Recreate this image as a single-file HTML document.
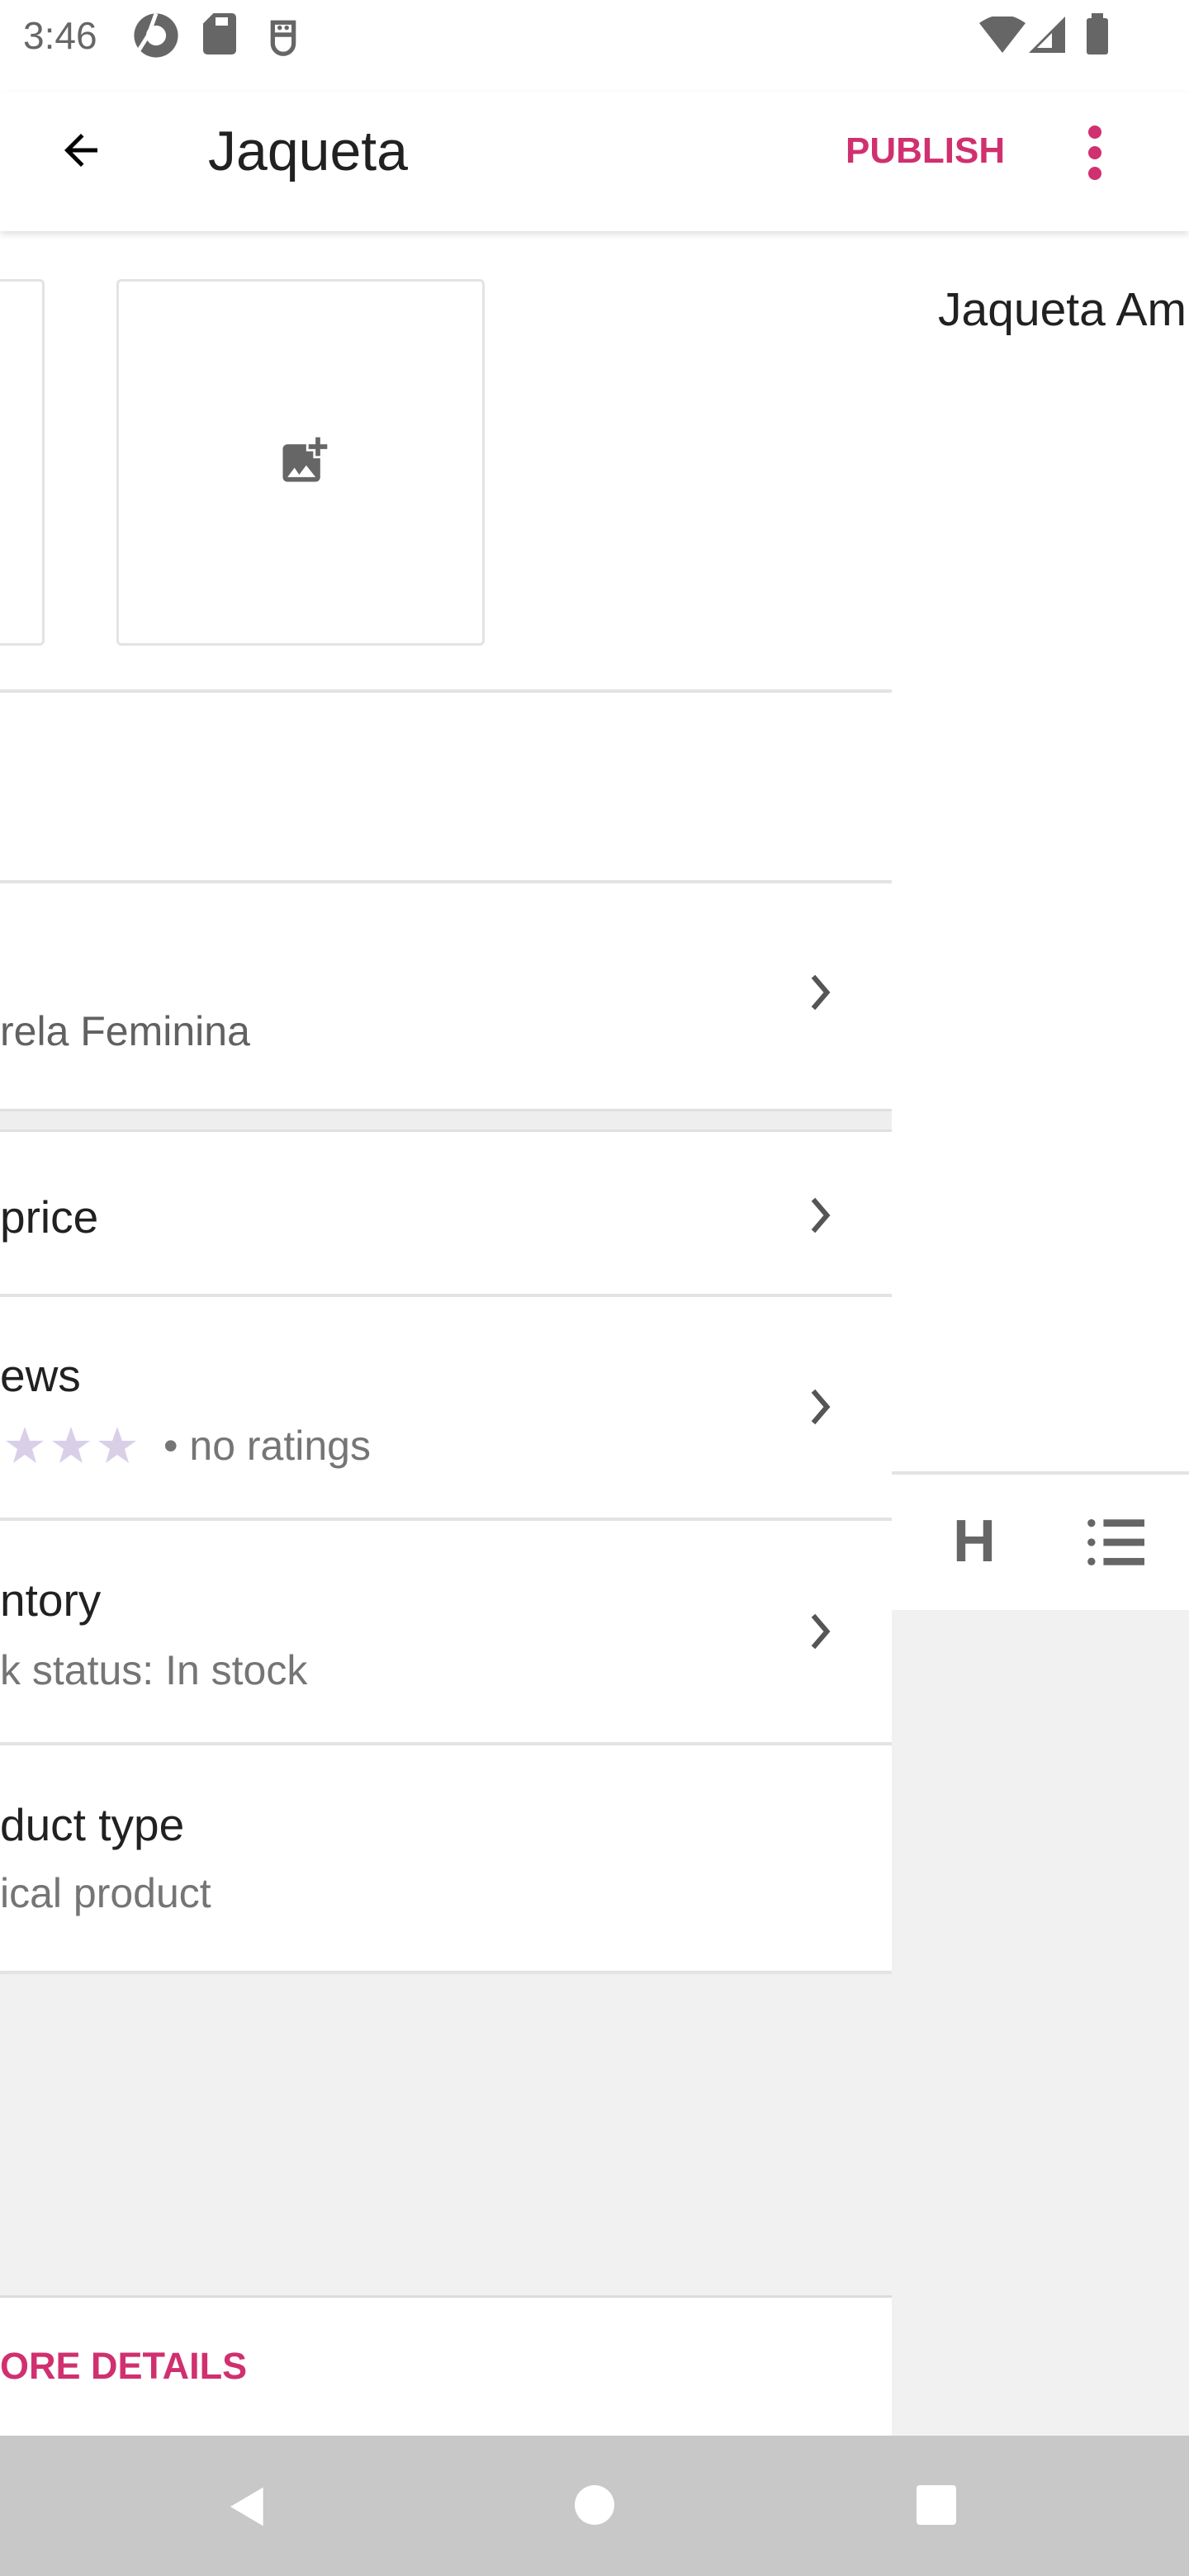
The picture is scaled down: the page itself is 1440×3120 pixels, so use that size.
<!DOCTYPE html>
<html><head><style>
*{margin:0;padding:0;box-sizing:border-box}
body{width:1440px;height:3120px;position:relative;overflow:hidden;background:#fff;font-family:"Liberation Sans",Roboto,sans-serif;}
.a{position:absolute}
.t{color:#212121;font-size:55px;white-space:nowrap}
.s{color:#757575;font-size:50px;white-space:nowrap}
.div{position:absolute;left:0;width:1080px;height:4px;background:#e3e3e3}
.chev{position:absolute;left:978px;width:36px;height:44px}
</style></head><body>
<!-- status bar -->
<div class="a" style="left:28px;top:16px;font-size:46px;color:#666">3:46</div>
<svg class="a" style="left:160px;top:14px" width="58" height="58" viewBox="0 0 24 24"><circle cx="12" cy="12" r="11" fill="#666"/><circle cx="12" cy="12" r="5" fill="#fff"/><path d="M12 1 L8 12 L3 20" stroke="#fff" stroke-width="2" fill="none"/></svg>
<svg class="a" style="left:246px;top:16px" width="40" height="50" viewBox="0 0 16 20"><path d="M5 0H14a2 2 0 0 1 2 2V18a2 2 0 0 1-2 2H2a2 2 0 0 1-2-2V5z" fill="#666"/><rect x="6" y="2" width="6" height="4" fill="#fff"/></svg>
<svg class="a" style="left:324px;top:14px" width="38" height="54" viewBox="0 0 18 25"><path d="M3 6h12v12a6 6 0 0 1-12 0z" fill="none" stroke="#666" stroke-width="2.5"/><line x1="3" y1="13" x2="15" y2="13" stroke="#666" stroke-width="2.5"/><circle cx="7" cy="9" r="1.3" fill="#666"/><circle cx="11" cy="9" r="1.3" fill="#666"/></svg>
<svg class="a" style="left:1186px;top:20px" width="56" height="44" viewBox="0 0 28 22"><path d="M0 4 Q14 -6 28 4 L14 22z" fill="#666"/></svg>
<svg class="a" style="left:1246px;top:20px" width="44" height="44" viewBox="0 0 22 22"><path d="M22 0V22H0z" fill="#666"/><path d="M14 10V19H5z" fill="#fff"/></svg>
<div class="a" style="left:1316px;top:22px;width:26px;height:44px;background:#666;border-radius:3px"></div>
<div class="a" style="left:1322px;top:16px;width:14px;height:8px;background:#666"></div>
<!-- toolbar -->
<div class="a" style="left:0;top:112px;width:1440px;height:168px;background:#fff;box-shadow:0 4px 8px rgba(0,0,0,.12);z-index:2">
<svg class="a" style="left:68px;top:40px" width="60" height="60" viewBox="0 0 24 24"><path d="M20 11H7.8l5.6-5.6L12 4l-8 8 8 8 1.4-1.4L7.8 13H20z" fill="#000"/></svg>
<div class="a" style="left:252px;top:32px;font-size:68px;color:#212121">Jaqueta</div>
<div class="a" style="left:1024px;top:46px;font-size:44px;color:#d0306f;font-weight:bold">PUBLISH</div>
<div class="a" style="left:1318px;top:40px;width:16px;height:16px;border-radius:50%;background:#d0306f"></div>
<div class="a" style="left:1318px;top:65px;width:16px;height:16px;border-radius:50%;background:#d0306f"></div>
<div class="a" style="left:1318px;top:90px;width:16px;height:16px;border-radius:50%;background:#d0306f"></div>
</div>
<!-- left panel -->
<div class="a" style="left:-10px;top:338px;width:64px;height:444px;border:3px solid #e3e3e3;border-radius:6px"></div>
<div class="a" style="left:141px;top:338px;width:446px;height:444px;border:3px solid #e3e3e3;border-radius:6px"></div>
<svg class="a" style="left:334px;top:524px" width="68" height="68" viewBox="0 0 24 24"><path d="M19 7v2.99s-1.99.01-2 0V7h-3s.01-1.99 0-2h3V2h2v3h3v2h-3zm-3 4V8h-3V5H5c-1.1 0-2 .9-2 2v12c0 1.1.9 2 2 2h12c1.1 0 2-.9 2-2v-8h-3zM5 19l3-4 2 3 3-4 4 5H5z" fill="#666"/></svg>
<div class="div" style="top:835px"></div>
<div class="div" style="top:1066px"></div>
<div class="a s" style="left:0;top:1220px;color:#616161">rela Feminina</div>
<svg class="chev" style="top:1180px" viewBox="0 0 12 16"><path d="M2 1l6 7-6 7" stroke="#555" stroke-width="2.2" fill="none"/></svg>
<div class="a" style="left:0;top:1343px;width:1080px;height:28px;background:#eeeeee;border-top:3px solid #e0e0e0;border-bottom:3px solid #e0e0e0"></div>
<div class="a t" style="left:0;top:1442px">price</div>
<svg class="chev" style="top:1450px" viewBox="0 0 12 16"><path d="M2 1l6 7-6 7" stroke="#555" stroke-width="2.2" fill="none"/></svg>
<div class="div" style="top:1567px"></div>
<div class="a t" style="left:0;top:1634px">ews</div>
<svg class="a" style="left:0;top:1724px" width="170" height="48" viewBox="0 0 170 48"><g fill="#d9d0e8"><path d="M30 4l6 17h17l-14 10 5 17-14-10-14 10 5-17-14-10h17z"/><path d="M86 4l6 17h17l-14 10 5 17-14-10-14 10 5-17-14-10h17z"/><path d="M142 4l6 17h17l-14 10 5 17-14-10-14 10 5-17-14-10h17z"/><path d="M-26 4l6 17h17l-14 10 5 17-14-10-14 10 5-17-14-10h17z"/></g></svg>
<div class="a s" style="left:198px;top:1722px">• no ratings</div>
<svg class="chev" style="top:1682px" viewBox="0 0 12 16"><path d="M2 1l6 7-6 7" stroke="#555" stroke-width="2.2" fill="none"/></svg>
<div class="div" style="top:1838px"></div>
<div class="a t" style="left:0;top:1906px">ntory</div>
<div class="a s" style="left:0;top:1994px">k status: In stock</div>
<svg class="chev" style="top:1954px" viewBox="0 0 12 16"><path d="M2 1l6 7-6 7" stroke="#555" stroke-width="2.2" fill="none"/></svg>
<div class="div" style="top:2110px"></div>
<div class="a t" style="left:0;top:2178px">duct type</div>
<div class="a s" style="left:0;top:2264px">ical product</div>
<div class="div" style="top:2387px;box-shadow:0 2px 4px rgba(0,0,0,.15)"></div>
<div class="a" style="left:0;top:2391px;width:1080px;height:389px;background:#f1f1f1"></div>
<div class="a" style="left:0;top:2780px;width:1080px;height:3px;background:#dcdcdc"></div>
<div class="a" style="left:0;top:2840px;font-size:45px;color:#d0306f;font-weight:bold">ORE DETAILS</div>
<!-- right panel -->
<div class="a" style="left:1136px;top:342px;font-size:57px;color:#212121;white-space:nowrap">Jaqueta Am</div>
<div class="a" style="left:1080px;top:1782px;width:360px;height:4px;background:#e3e3e3"></div>
<div class="a" style="left:1080px;top:1950px;width:360px;height:1000px;background:#f1f1f1"></div>
<div class="a" style="left:1154px;top:1826px;font-size:72px;font-weight:bold;color:#666">H</div>
<svg class="a" style="left:1316px;top:1838px" width="70" height="60" viewBox="0 0 24 20"><g fill="#666"><circle cx="2" cy="2" r="1.6"/><circle cx="2" cy="10" r="1.6"/><circle cx="2" cy="18" r="1.6"/><rect x="7" y="0.5" width="17" height="3"/><rect x="7" y="8.5" width="17" height="3"/><rect x="7" y="16.5" width="17" height="3"/></g></svg>
<!-- nav bar -->
<div class="a" style="left:0;top:2950px;width:1440px;height:170px;background:#c8c8c8"></div>
<svg class="a" style="left:272px;top:3008px" width="56" height="56" viewBox="0 0 24 24"><path d="M20 2V22L3 12z" fill="#fff"/></svg>
<div class="a" style="left:696px;top:3010px;width:48px;height:48px;border-radius:50%;background:#fff"></div>
<div class="a" style="left:1110px;top:3010px;width:48px;height:48px;border-radius:4px;background:#fff"></div>
</body></html>
